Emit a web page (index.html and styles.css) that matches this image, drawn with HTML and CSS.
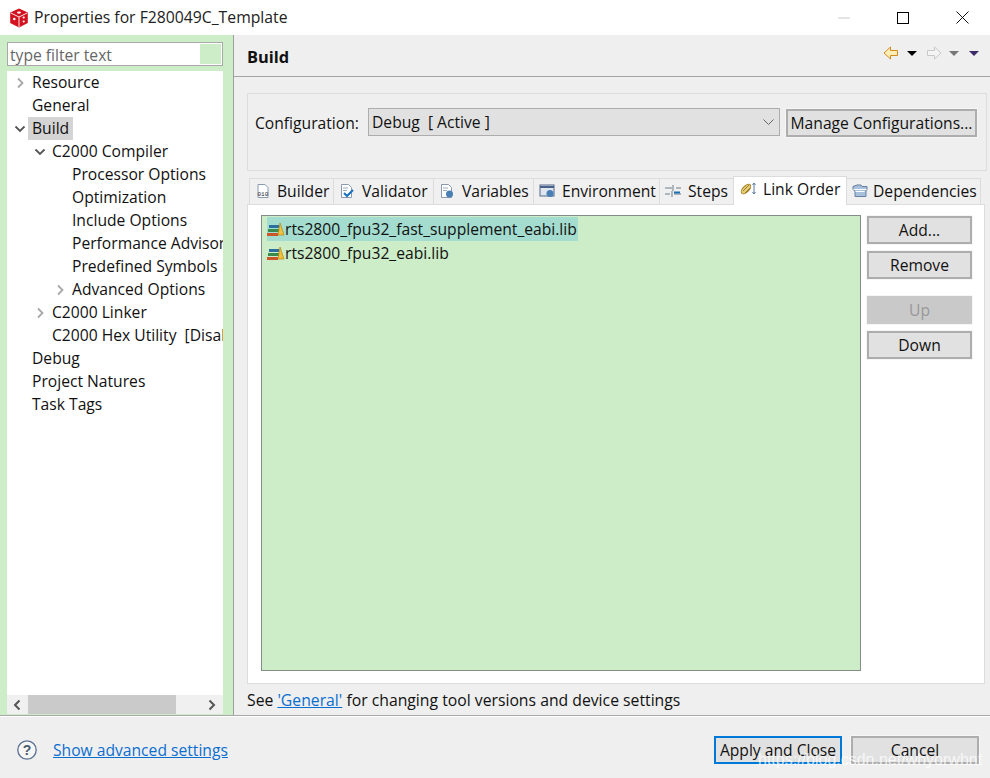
FILE: index.html
```html
<!DOCTYPE html>
<html lang="en">
<head>
<meta charset="utf-8">
<title>Properties for F280049C_Template</title>
<link rel="stylesheet" href="styles.css">
</head>
<body>
<div class="dialog">
  <header class="titlebar">
    <svg class="app-icon" width="20" height="20" viewBox="0 0 20 20"><path d="M10 .5 18.800 4.600V15L10 19.500 1.200 15V4.600Z" fill="#d3121f"/><path d="M1.800 5 10 9v10M18.200 5 10 9" stroke="#fff" stroke-width=".9" fill="none"/><ellipse cx="10" cy="4.600" rx="2" ry="1.100" fill="#fff"/><circle cx="5.300" cy="11" r="1.300" fill="#fff"/><circle cx="14.700" cy="9.500" r="1.100" fill="#fff"/><circle cx="14.700" cy="13.500" r="1.100" fill="#fff"/></svg>
    <span class="title">Properties for F280049C_Template</span>
    <div class="winctl">
      <svg width="12" height="12" viewBox="0 0 12 12"><path d="M0 6h12" stroke="#c8c8c8"/></svg>
      <svg width="12" height="12" viewBox="0 0 12 12"><rect x=".5" y=".5" width="11" height="11" fill="none" stroke="#000"/></svg>
      <svg width="13" height="13" viewBox="0 0 13 13"><path d="M.5.5l12 12M12.500.5l-12 12" stroke="#111" fill="none"/></svg>
    </div>
  </header>
  <div class="main">
    <aside class="side">
      <div class="filter"><span class="filter-text">type filter text</span><span class="filter-btn"></span></div>
      <div class="treebox">
        <ul class="tree">
          <li><svg class="tw" viewBox="0 0 10 12"><path d="M3 1.500 7.500 6 3 10.500" fill="none" stroke="#a8a8a8" stroke-width="1.800"/></svg><span class="lab">Resource</span></li>
          <li><span class="tw"></span><span class="lab">General</span></li>
          <li><svg class="tw" viewBox="0 0 12 10"><path d="M1.500 2.500 6 7l4.500-4.500" fill="none" stroke="#555" stroke-width="1.800"/></svg><span class="lab sel">Build</span></li>
          <li class="l1"><svg class="tw" viewBox="0 0 12 10"><path d="M1.500 2.500 6 7l4.500-4.500" fill="none" stroke="#555" stroke-width="1.800"/></svg><span class="lab">C2000 Compiler</span></li>
          <li class="l2"><span class="tw"></span><span class="lab">Processor Options</span></li>
          <li class="l2"><span class="tw"></span><span class="lab">Optimization</span></li>
          <li class="l2"><span class="tw"></span><span class="lab">Include Options</span></li>
          <li class="l2"><span class="tw"></span><span class="lab">Performance Advisor</span></li>
          <li class="l2"><span class="tw"></span><span class="lab">Predefined Symbols</span></li>
          <li class="l2"><svg class="tw" viewBox="0 0 10 12"><path d="M3 1.500 7.500 6 3 10.500" fill="none" stroke="#a8a8a8" stroke-width="1.800"/></svg><span class="lab">Advanced Options</span></li>
          <li class="l1"><svg class="tw" viewBox="0 0 10 12"><path d="M3 1.500 7.500 6 3 10.500" fill="none" stroke="#a8a8a8" stroke-width="1.800"/></svg><span class="lab">C2000 Linker</span></li>
          <li class="l1"><span class="tw"></span><span class="lab">C2000 Hex Utility&nbsp; [Disabled]</span></li>
          <li><span class="tw"></span><span class="lab">Debug</span></li>
          <li><span class="tw"></span><span class="lab">Project Natures</span></li>
          <li><span class="tw"></span><span class="lab">Task Tags</span></li>
        </ul>
        <div class="hscroll">
          <svg class="arrow" width="8" height="12" viewBox="0 0 8 12"><path d="M6.500 1.500 2 6l4.500 4.500" fill="none" stroke="#555" stroke-width="2"/></svg>
          <span class="thumb"></span>
          <svg class="arrow" width="8" height="12" viewBox="0 0 8 12"><path d="M1.500 1.500 6 6l-4.500 4.500" fill="none" stroke="#555" stroke-width="2"/></svg>
        </div>
      </div>
    </aside>
    <section class="content">
      <div class="head">
        <h1>Build</h1>
        <div class="nav">
          <svg width="16" height="14" viewBox="0 0 16 14"><path d="M7.500 1 1 7l6.500 6V9.500h7v-5h-7Z" fill="#fdeeb6" stroke="#d08a1e"/></svg>
          <svg class="drop" width="10" height="5" viewBox="0 0 10 5"><path d="M0 0h10L5 5Z" fill="#000"/></svg>
          <svg class="fwd" width="16" height="14" viewBox="0 0 16 14"><path d="M8.500 1 15 7l-6.500 6V9.500h-7v-5h7Z" fill="#f4f4f4" stroke="#c8c8c8"/></svg>
          <svg class="drop d2" width="10" height="5" viewBox="0 0 10 5"><path d="M0 0h10L5 5Z" fill="#777"/></svg>
          <svg class="drop end" width="10" height="5" viewBox="0 0 10 5"><path d="M0 0h10L5 5Z" fill="#3d2a6a"/></svg>
        </div>
      </div>
      <div class="body">
        <div class="config">
          <span class="cfg-label">Configuration:</span>
          <div class="combo"><span>Debug&nbsp; [ Active ]</span><svg width="11" height="6" viewBox="0 0 11 6"><path d="M.5.500 5.500 5.500l5-5" fill="none" stroke="#666"/></svg></div>
          <button class="btn manage">Manage Configurations...</button>
        </div>
        <nav class="tabs">
          <div class="tab"><svg width="16" height="16" viewBox="0 0 16 16"><path d="M3 1.500h7l3 3v10H3Z" fill="#fff" stroke="#8a9ab0"/><text x="2.500" y="13" font-size="6" font-family="Liberation Mono" fill="#223">010</text></svg>Builder</div>
          <div class="tab"><svg width="16" height="16" viewBox="0 0 16 16"><path d="M2.500 1.500h7l3 3v10h-10Z" fill="#fff" stroke="#8a9ab0"/><path d="M4 5h5M4 7.500h4" stroke="#9ab"/><path d="M5 10l3 3 6-6" fill="none" stroke="#1a6fc0" stroke-width="2"/></svg>Validator</div>
          <div class="tab"><svg width="16" height="16" viewBox="0 0 16 16"><path d="M2.500 1.500h7l3 3v10h-10Z" fill="#fff" stroke="#8a9ab0"/><path d="M4 5h5M4 7.500h4" stroke="#9ab"/><circle cx="10.500" cy="11" r="3.500" fill="#4a7fb5"/></svg>Variables</div>
          <div class="tab"><svg width="16" height="16" viewBox="0 0 16 16"><rect x="1" y="2" width="14" height="11" fill="#dfe6f0" stroke="#55698a"/><path d="M1 3h14v2H1Z" fill="#4a6289"/><circle cx="11" cy="10.500" r="3.500" fill="#4a7fb5"/></svg>Environment</div>
          <div class="tab"><svg width="16" height="16" viewBox="0 0 16 16"><path d="M0 5h7M11 5h5M0 11h5M9 11h7" stroke="#6a7a8a"/><path d="M8 2v6M7 8v6" stroke="#6a7a8a"/><path d="M9 9.500h6" stroke="#1b6fb5" stroke-width="2"/></svg>Steps</div>
          <div class="tab active"><svg width="16" height="16" viewBox="0 0 16 16"><ellipse cx="6" cy="8" rx="6" ry="3" transform="rotate(-45 6 8)" fill="#e6cf7a" stroke="#a07a20"/><path d="M3 10l6-6M5 12l5-5" stroke="#a07a20" fill="none"/><path d="M14 2v11M12.500 4 14 2l1.500 2M12.500 11l1.500 2 1.500-2" stroke="#5a7aa0" fill="none"/></svg>Link Order</div>
          <div class="tab"><svg width="16" height="16" viewBox="0 0 16 16"><path d="M1 3.500 5 2h4l1 1.500h5v3l-1 1.500v5.500H3V8L1 6.500Z" fill="#a9c0dc" stroke="#66809f"/><path d="M1.500 6.500h13M3.500 8.500h9" stroke="#fff"/></svg>Dependencies</div>
        </nav>
        <div class="panel">
          <ul class="liblist">
            <li class="picked"><svg width="18" height="14" viewBox="0 0 18 14"><path d="M0 11h11v3H0Z" fill="#c9572a"/><path d="M1 7h11v3H1Z" fill="#3a8a50"/><path d="M2 3h10v3H2Z" fill="#2b6fa0"/><path d="M13 1l4 12h-6Z" fill="#f0c040" stroke="#b8860b" stroke-width=".7"/></svg><span>rts2800_fpu32_fast_supplement_eabi.lib</span></li>
            <li><svg width="18" height="14" viewBox="0 0 18 14"><path d="M0 11h11v3H0Z" fill="#c9572a"/><path d="M1 7h11v3H1Z" fill="#3a8a50"/><path d="M2 3h10v3H2Z" fill="#2b6fa0"/><path d="M13 1l4 12h-6Z" fill="#f0c040" stroke="#b8860b" stroke-width=".7"/></svg><span>rts2800_fpu32_eabi.lib</span></li>
          </ul>
          <div class="side-btns">
            <button class="btn">Add...</button>
            <button class="btn">Remove</button>
            <button class="btn off spaced">Up</button>
            <button class="btn">Down</button>
          </div>
        </div>
        <p class="see">See <a href="#">'General'</a> for changing tool versions and device settings</p>
      </div>
    </section>
  </div>
  <footer class="foot">
    <svg class="help" width="20" height="20" viewBox="0 0 20 20"><circle cx="10" cy="10" r="9.200" fill="#f6f6f6" stroke="#5a7090" stroke-width="1.300"/><text x="10" y="15" text-anchor="middle" font-size="14" font-weight="700" font-family="Liberation Sans" fill="#4a5a70">?</text></svg>
    <a class="adv" href="#">Show advanced settings</a>
    <button class="btn primary">Apply and Close</button>
    <button class="btn cancel">Cancel</button>
  </footer>
  <div class="watermark">https://blog.csdn.net/whyorwhnt</div>
</div>
</body>
</html>
```
FILE: styles.css
```css
* { box-sizing: border-box; }
html, body { margin: 0; padding: 0; }
body { width: 990px; height: 778px; overflow: hidden; font: 15.65px/20px "Open Sans", "Noto Sans", sans-serif; color: #111; background: #efefef; }
.dialog { position: relative; width: 990px; height: 778px; display: flex; flex-direction: column; }
.titlebar { height: 35px; background: #fff; display: flex; align-items: center; padding-left: 9px; }
.title { margin: 0 0 1px 5px; color: #222; font-size: 15.75px; }
.winctl { margin-left: auto; display: flex; align-items: center; gap: 47px; padding-right: 21px; }
.main { height: 681px; display: flex; border-bottom: 1px solid #a9a9a9; }
.side { width: 234px; flex: none; background: #cdecc8; border-right: 1px solid #9e9e9e; padding: 7px 10px 1px 7px; display: flex; flex-direction: column; }
.filter { height: 24px; flex: none; border: 1px solid #a9a9a9; background: #fff; display: flex; align-items: center; padding: 1px 1px 1px 2px; }
.filter-text { flex: 1; color: #666; padding-top: 1px; }
.filter-btn { width: 21px; height: 20px; background: #cdecc8; }
.treebox { margin-top: 5px; flex: 1; min-height: 0; background: #fff; display: flex; flex-direction: column; overflow: hidden; }
.tree { flex: 1; min-height: 0; margin: 0; padding: 0; list-style: none; white-space: nowrap; overflow: hidden; }
.tree li { height: 23px; display: flex; align-items: center; padding-left: 7px; }
.tree li.l1 { padding-left: 27px; }
.tree li.l2 { padding-left: 47px; }
.tw { width: 12px; height: 12px; flex: none; margin-right: 2px; }
.lab { padding: 0 4px; line-height: 23px; }
.sel { background: #d4d4d4; }
.hscroll { height: 19px; flex: none; background: #f0f0f0; display: flex; align-items: center; }
.arrow { flex: none; margin: 0 7px 0 6px; }
.hscroll .arrow:last-child { margin: 0 7px 0 auto; }
.thumb { width: 148px; height: 19px; background: #cacaca; }
.content { flex: 1; min-width: 0; display: flex; flex-direction: column; }
.head { height: 42px; flex: none; border-bottom: 1px solid #a4a4a4; display: flex; align-items: center; padding: 0 11px 0 13px; justify-content: space-between; }
h1 { margin: 2px 0 0; font-size: 16.4px; font-weight: 700; line-height: 20px; color: #111; }
.nav { display: flex; align-items: center; margin-top: -5px; }
.drop { margin-left: 8px; }
.fwd { margin-left: 9px; }
.drop.d2 { margin-left: 7px; }
.drop.end { margin-left: 10px; }
.body { flex: 1; min-height: 0; padding: 16px 3px 0 13px; display: flex; flex-direction: column; }
.config { height: 78px; flex: none; border: 1px solid #dcdcdc; display: flex; align-items: center; padding: 0 9px 20px 7px; }
.cfg-label { width: 113px; flex: none; padding-top: 2px; }
.combo { width: 412px; height: 28px; flex: none; background: #e1e1e1; border: 1px solid #adadad; display: flex; align-items: center; justify-content: space-between; padding: 0 5px 0 3px; }
.btn { font: inherit; color: #111; background: #e1e1e1; border: 2px solid #adadad; outline: 1px solid #f6f6f6; padding: 0; height: 28px; }
.manage { width: 192px; margin-left: 6px; margin-top: 1px; }
.tabs { height: 27px; flex: none; margin-top: 7px; padding-left: 2px; display: flex; align-items: flex-end; }
.tab { height: 26px; flex: none; background: #f0f0f0; border: 1px solid #dcdcdc; border-bottom: 0; margin-right: -1px; display: flex; align-items: center; gap: 7px; padding: 0 0 2px 5px; margin-bottom: 1px; }
.tab:nth-child(1) { width: 85px; gap: 6px; }
.tab:nth-child(2) { width: 101px; }
.tab:nth-child(3) { width: 101px; }
.tab:nth-child(4) { width: 127px; }
.tab:nth-child(5) { width: 75px; }
.tab:nth-child(7) { width: 135px; gap: 5px; }
.tab.active { width: 114px; height: 29px; background: #fff; padding: 0 0 4px 6px; margin-bottom: 0; position: relative; z-index: 1; }
.panel { height: 480px; flex: none; width: 738px; background: #fff; border: 1px solid #dcdcdc; padding: 10px 0 0 13px; display: flex; align-items: flex-start; margin-top: -1px; }
.liblist { width: 600px; height: 456px; flex: none; margin: 0; padding: 1px 0 0 5px; list-style: none; background: #cdecc8; border: 1px solid #848c88; }
.liblist li { height: 24px; display: flex; align-items: center; }
.liblist li svg { flex: none; }
.liblist li span { line-height: 24px; }
.liblist .picked { width: 311px; background: #a4dccf; }
.side-btns { width: 105px; margin-left: 6px; display: flex; flex-direction: column; gap: 7px; padding-top: 1px; }
.side-btns .btn { width: 105px; }
.off { background: #c9c9c9; border-color: #c9c9c9; color: #999; }
.spaced { margin-top: 10px; }
.see { margin: 5px 0 0; line-height: 22px; font-size: 15.75px; }
a { color: #0b6ecf; text-decoration: underline; }
.foot { flex: 1; background: #efefef; border-top: 1px solid #fff; display: flex; align-items: center; padding: 5px 11px 0 17px; position: relative; }
.help { flex: none; }
.adv { margin-left: 16px; }
.primary { margin-left: auto; width: 128px; height: 28px; border-color: #0078d7; outline: 0; }
.cancel { margin-left: 9px; width: 128px; }
.watermark { position: absolute; left: 758px; top: 750px; color: rgba(255,255,255,.75); font: 16px/20px "Liberation Sans", sans-serif; pointer-events: none; }
```
